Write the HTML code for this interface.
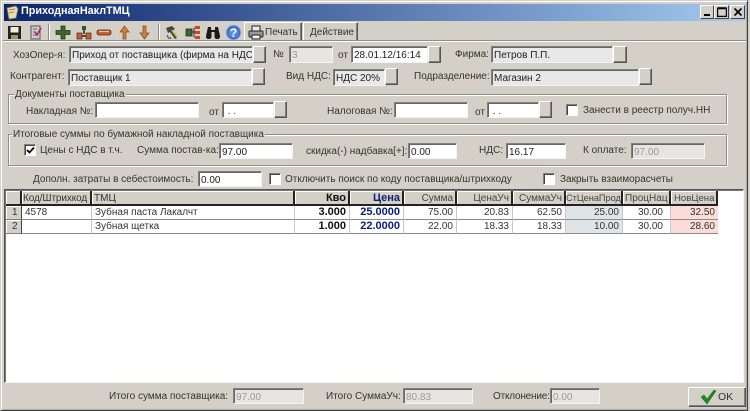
<!DOCTYPE html>
<html><head><meta charset="utf-8"><style>
html,body{margin:0;padding:0;width:750px;height:411px;overflow:hidden;background:#d4d0c8}
body{position:relative;font:10px/13px "Liberation Sans","Noto Sans CJK SC",sans-serif;color:#222}
div,svg{position:absolute;box-sizing:border-box}
.l{white-space:nowrap;color:#333;height:13px}
.i{background:#fff;border:1px solid;border-color:#808080 #f4f3ef #f4f3ef #808080;box-shadow:inset 1px 1px 0 #666;padding:2px 0 0 2px;white-space:nowrap;overflow:hidden;color:#222;font-size:10px}
.g{background:#e8e8e8}
.d{background:#e6e5e2;color:#9a9a9a}
.b{background:#d4d0c8;border:1px solid;border-color:#fff #555 #555 #fff;box-shadow:inset -1px -1px 0 #808080}
.c{width:12px;height:12px;background:#fff;border:1px solid;border-color:#808080 #fff #fff #808080;box-shadow:inset 1px 1px 0 #444}
.gb{border:1px solid #8f8d88;box-shadow:1px 1px 0 #fff,inset 1px 1px 0 #fff}
.gt{background:#d4d0c8;white-space:nowrap;color:#333;padding:0 1px;height:13px}
.h{top:191px;height:15px;background:#d4d0c8;border-right:2px solid #222;border-bottom:2px solid #222;box-shadow:inset 1px 1px 0 #fff;padding:1px 2px 0;white-space:nowrap;overflow:hidden;color:#333}
.r{text-align:right}
.k{height:14px;border-right:1px solid #c8c8c8;border-bottom:1px solid #8a8a8a;padding:0 3px;white-space:nowrap;overflow:hidden;color:#333;line-height:13px;font-size:10px}
.n{font-weight:bold;color:#111;font-size:11px}.p{font-weight:bold;color:#0a1f78;font-size:11px}
.w{height:14px;top:5px;background:#d4d0c8;border:1px solid;border-color:#fff #444 #444 #fff}
</style></head><body>
<div style="left:0;top:0;width:748px;height:411px;border:1px solid;border-color:#d4d0c8 #404040 #404040 #d4d0c8;box-shadow:inset 1px 1px 0 #fff,inset -1px -1px 0 #aaa"></div>

<!-- title -->
<div style="left:4px;top:4px;width:742px;height:17px;background:linear-gradient(90deg,#0a246a,#a6caf0)"></div>
<svg style="left:5px;top:5px" width="14" height="15" viewBox="0 0 14 15"><path d="M2 3L11 1L13 4L11 13L4 14Z" fill="#e8dcb0" stroke="#8a7a50" stroke-width=".8"/><path d="M4 5L10 4M4 8L9 7" stroke="#a08850"/></svg>
<div style="left:21px;top:5px;color:#fff;font-weight:bold;height:14px;font-size:10.800px;white-space:nowrap">ПриходнаяНаклТМЦ</div>
<div class="w" style="left:700px;width:14px"><svg style="left:3px;top:8px" width="8" height="2"><rect width="6" height="2" fill="#000"/></svg></div>
<div class="w" style="left:714px;width:15px"><svg style="left:2px;top:1px" width="10" height="10"><path d="M.5 1.500H9.500V9.500H.5Z M.5 1H9.500" fill="none" stroke="#000" stroke-width="1.400"/></svg></div>
<div class="w" style="left:730px;width:15px"><svg style="left:2px;top:1px" width="10" height="10"><path d="M1.500 1.500L8.500 8.500M8.500 1.500L1.500 8.500" stroke="#000" stroke-width="1.700"/></svg></div>

<!-- toolbar -->
<svg style="left:7px;top:25px" width="15" height="15" viewBox="0 0 15 15"><path d="M1 1H14V14H1Z" fill="#222"/><rect x="3.500" y="2" width="8" height="5.500" fill="#efeedd"/><rect x="4" y="10" width="7" height="4" fill="#9a9a60"/></svg>
<svg style="left:29px;top:25px" width="14" height="15" viewBox="0 0 14 15"><path d="M2 1H11V14H2Z" fill="#ccc" stroke="#555"/><path d="M4 4H8M4 7H7M4 10H8" stroke="#666"/><path d="M6 7L8 10L12 3" fill="none" stroke="#b02070" stroke-width="1.600"/></svg>
<div style="left:48px;top:24px;width:2px;height:16px;border-left:1px solid #8a8a8a;border-right:1px solid #fff"></div>
<svg style="left:55px;top:25px" width="16" height="15" viewBox="0 0 16 15"><path d="M6 1H10V5.500H15V9.500H10V14H6V9.500H1V5.500H6Z" fill="#3a6a28" stroke="#1d3d14" stroke-width=".8"/></svg>
<svg style="left:76px;top:25px" width="16" height="15" viewBox="0 0 16 15"><rect x="6" y="1" width="4" height="4" fill="#2a5a20"/><path d="M8 5V9" stroke="#222" stroke-width="1.500"/><rect x="1" y="8" width="5" height="6" fill="#d85a20" stroke="#333" stroke-width=".7"/><rect x="10" y="8" width="5" height="6" fill="#d85a20" stroke="#333" stroke-width=".7"/><path d="M6 11H10" stroke="#222" stroke-width="1.500"/></svg>
<svg style="left:96px;top:27px" width="16" height="11" viewBox="0 0 16 11"><rect x="1" y="3" width="14" height="5" rx="2" fill="#d85a28" stroke="#333" stroke-width=".8"/><path d="M3 4.500H13" stroke="#f3c0a0"/></svg>
<svg style="left:119px;top:25px" width="11" height="15" viewBox="0 0 11 15"><path d="M5.500 1L10 7H7V14H4V7H1Z" fill="#e8781e" stroke="#555" stroke-width=".7"/></svg>
<svg style="left:139px;top:25px" width="11" height="15" viewBox="0 0 11 15"><path d="M4 1H7V8H10L5.500 14L1 8H4Z" fill="#e8781e" stroke="#555" stroke-width=".7"/></svg>
<div style="left:158px;top:24px;width:2px;height:16px;border-left:1px solid #8a8a8a;border-right:1px solid #fff"></div>
<svg style="left:164px;top:25px" width="16" height="15" viewBox="0 0 16 15"><path d="M2 3L8 1L11 4L8 6L13 13L11 14L6 7L4 8Z" fill="#444"/><path d="M8 5L13 12" stroke="#d8c030" stroke-width="1.600"/><path d="M3 10L5 14M6 12L7 14" stroke="#555" stroke-width="1.200"/></svg>
<svg style="left:185px;top:26px" width="16" height="13" viewBox="0 0 16 13"><rect x="1" y="3" width="6" height="7" fill="#3a6a30" stroke="#222" stroke-width=".7"/><rect x="10" y="0" width="5" height="3" fill="#c84a20"/><rect x="10" y="5" width="5" height="3" fill="#c84a20"/><rect x="10" y="10" width="5" height="3" fill="#c84a20"/><path d="M7 6H10M9 1.500V11.500" stroke="#222"/></svg>
<svg style="left:205px;top:26px" width="16" height="13" viewBox="0 0 16 13"><path d="M3 1H6V4H10V1H13L15 10A2.500 2.500 0 0 1 9.500 11V6H6.500V11A2.500 2.500 0 0 1 1 10Z" fill="#1a1a1a"/></svg>
<svg style="left:225px;top:24px" width="17" height="17" viewBox="0 0 17 17"><circle cx="8.500" cy="8.500" r="7.500" fill="#3f6fc8" stroke="#a8c0e8"/><circle cx="8.500" cy="8.500" r="5" fill="#5a8ae0"/><text x="8.500" y="13" text-anchor="middle" font-family="Liberation Sans" font-weight="bold" font-size="12" fill="#fff">?</text></svg>
<div class="b" style="left:244px;top:22px;width:58px;height:20px"></div>
<svg style="left:248px;top:25px" width="16" height="15" viewBox="0 0 16 15"><rect x="4" y="1" width="8" height="5" fill="#eee" stroke="#222"/><rect x="1" y="6" width="14" height="6" rx="1" fill="#999" stroke="#222"/><rect x="4" y="10" width="8" height="4" fill="#eee" stroke="#222"/></svg>
<div class="l" style="left:265px;top:26px">Печать</div>
<div class="b" style="left:303px;top:22px;width:55px;height:20px"></div>
<div class="l" style="left:310px;top:26px">Действие</div>
<div style="left:3px;top:40px;width:743px;height:2px;border-top:1px solid #8f8d88;border-bottom:1px solid #fff"></div>

<!-- row 1 -->
<div class="l" style="left:13px;top:49px">ХозОпер-я:</div>
<div class="i g" style="left:69px;top:46px;width:184px;height:17px">Приход от поставщика (фирма на НДС</div>
<div class="b" style="left:253px;top:46px;width:13px;height:17px"></div>
<div class="l" style="left:273px;top:48px">№</div>
<div class="i d" style="left:289px;top:46px;width:44px;height:17px">3</div>
<div class="l" style="left:338px;top:49px">от</div>
<div class="i" style="left:351px;top:46px;width:77px;height:17px">28.01.12/16:14</div>
<div class="b" style="left:428px;top:46px;width:13px;height:17px"></div>
<div class="l" style="left:455px;top:48px">Фирма:</div>
<div class="i g" style="left:491px;top:46px;width:122px;height:17px">Петров П.П.</div>
<div class="b" style="left:613px;top:46px;width:14px;height:17px"></div>

<!-- row 2 -->
<div class="l" style="left:10px;top:70px">Контрагент:</div>
<div class="i g" style="left:68px;top:69px;width:184px;height:17px">Поставщик 1</div>
<div class="b" style="left:252px;top:68px;width:13px;height:17px"></div>
<div class="l" style="left:286px;top:70px">Вид НДС:</div>
<div class="i g" style="left:333px;top:69px;width:52px;height:17px">НДС 20%</div>
<div class="b" style="left:385px;top:68px;width:13px;height:17px"></div>
<div class="l" style="left:414px;top:70px">Подразделение:</div>
<div class="i g" style="left:491px;top:69px;width:148px;height:17px">Магазин 2</div>
<div class="b" style="left:639px;top:68px;width:13px;height:17px"></div>

<!-- group 1 -->
<div class="gb" style="left:8px;top:94px;width:719px;height:30px"></div>
<div class="gt" style="left:14px;top:88px">Документы поставщика</div>
<div class="l" style="left:26px;top:105px">Накладная №:</div>
<div class="i" style="left:95px;top:102px;width:104px;height:16px"></div>
<div class="l" style="left:209px;top:106px">от</div>
<div class="i" style="left:222px;top:102px;width:52px;height:16px">&nbsp;. .</div>
<div class="b" style="left:274px;top:101px;width:13px;height:17px"></div>
<div class="l" style="left:327px;top:105px">Налоговая №:</div>
<div class="i" style="left:394px;top:102px;width:74px;height:16px"></div>
<div class="l" style="left:475px;top:106px">от</div>
<div class="i" style="left:487px;top:102px;width:52px;height:16px">&nbsp;. .</div>
<div class="b" style="left:539px;top:101px;width:13px;height:17px"></div>
<div class="c" style="left:566px;top:104px"></div>
<div class="l" style="left:583px;top:104px">Занести в реестр получ.НН</div>

<!-- group 2 -->
<div class="gb" style="left:8px;top:134px;width:719px;height:32px"></div>
<div class="gt" style="left:12px;top:128px">Итоговые суммы по бумажной накладной поставщика</div>
<div class="c" style="left:24px;top:144px"><svg style="left:1px;top:1px" width="9" height="9"><path d="M1 4L3.500 6.500L8 1.500" fill="none" stroke="#000" stroke-width="1.800"/></svg></div>
<div class="l" style="left:40px;top:144px">Цены с НДС в т.ч.</div>
<div class="l" style="left:137px;top:144px">Сумма постав-ка:</div>
<div class="i" style="left:219px;top:143px;width:74px;height:16px">97.00</div>
<div class="l" style="left:306px;top:145px">скидка(-) надбавка[+]:</div>
<div class="i" style="left:408px;top:143px;width:49px;height:16px">0.00</div>
<div class="l" style="left:479px;top:144px">НДС:</div>
<div class="i" style="left:506px;top:143px;width:60px;height:16px">16.17</div>
<div class="l" style="left:583px;top:144px">К оплате:</div>
<div class="i d" style="left:631px;top:143px;width:74px;height:16px">97.00</div>

<!-- row 3 -->
<div class="l" style="left:33px;top:173px">Дополн. затраты в себестоимость:</div>
<div class="i" style="left:198px;top:171px;width:64px;height:16px">0.00</div>
<div class="c" style="left:269px;top:173px"></div>
<div class="l" style="left:285px;top:173px">Отключить поиск по коду поставщика/штрихкоду</div>
<div class="c" style="left:543px;top:173px"></div>
<div class="l" style="left:560px;top:173px">Закрыть взаиморасчеты</div>

<!-- grid -->
<div style="left:4px;top:189px;width:740px;height:194px;background:#fff;border:1px solid;border-color:#555 #f4f3ef #f4f3ef #555;box-shadow:inset 1px 1px 0 #777"></div>
<div class="h" style="left:6px;width:16px"></div>
<div class="h" style="left:22px;width:70px;padding-left:1px;letter-spacing:-.1px">Код/Штрихкод</div>
<div class="h" style="left:92px;width:203px">ТМЦ</div>
<div class="h r n" style="left:295px;width:55px">Кво</div>
<div class="h r p" style="left:350px;width:54px">Цена</div>
<div class="h r" style="left:404px;width:53px;color:#444">Сумма</div>
<div class="h r" style="left:457px;width:56px;color:#444">ЦенаУч</div>
<div class="h r" style="left:513px;width:53px;color:#444">СуммаУч</div>
<div class="h" style="left:566px;width:57px;padding:1px 0 0 0;color:#444;font-size:9.200px">СтЦенаПрод</div>
<div class="h" style="left:623px;width:48px;color:#444">ПроцНац</div>
<div class="h" style="left:671px;width:47px;color:#444;padding-left:3px;font-size:9.600px">НовЦена</div>

<div class="h" style="left:6px;top:206px;width:16px;height:14px;border:0;border-right:1px solid #444;border-bottom:1px solid #808080;padding:0 0 0 6px;line-height:13px">1</div>
<div class="h" style="left:6px;top:220px;width:16px;height:14px;border:0;border-right:1px solid #444;border-bottom:1px solid #808080;padding:0 0 0 6px;line-height:13px">2</div>

<div class="k" style="left:22px;top:206px;width:70px">4578</div>
<div class="k" style="left:92px;top:206px;width:203px">Зубная паста Лакалчт</div>
<div class="k r n" style="left:295px;top:206px;width:55px">3.000</div>
<div class="k r p" style="left:350px;top:206px;width:54px">25.0000</div>
<div class="k r" style="left:404px;top:206px;width:53px">75.00</div>
<div class="k r" style="left:457px;top:206px;width:56px">20.83</div>
<div class="k r" style="left:513px;top:206px;width:53px">62.50</div>
<div class="k r" style="left:566px;top:206px;width:57px;background:#dfe5e6">25.00</div>
<div class="k r" style="left:623px;top:206px;width:48px;padding-right:7px">30.00</div>
<div class="k r" style="left:671px;top:206px;width:47px;background:#fbdcd8;border-right:0">32.50</div>

<div class="k" style="left:22px;top:220px;width:70px"></div>
<div class="k" style="left:92px;top:220px;width:203px">Зубная щетка</div>
<div class="k r n" style="left:295px;top:220px;width:55px">1.000</div>
<div class="k r p" style="left:350px;top:220px;width:54px">22.0000</div>
<div class="k r" style="left:404px;top:220px;width:53px">22.00</div>
<div class="k r" style="left:457px;top:220px;width:56px">18.33</div>
<div class="k r" style="left:513px;top:220px;width:53px">18.33</div>
<div class="k r" style="left:566px;top:220px;width:57px;background:#dfe5e6">10.00</div>
<div class="k r" style="left:623px;top:220px;width:48px;padding-right:7px">30.00</div>
<div class="k r" style="left:671px;top:220px;width:47px;background:#fbdcd8;border-right:0">28.60</div>

<!-- bottom -->
<div class="l" style="left:109px;top:390px">Итого сумма поставщика:</div>
<div class="i d" style="left:233px;top:388px;width:71px;height:16px">97.00</div>
<div class="l" style="left:326px;top:390px">Итого СуммаУч:</div>
<div class="i d" style="left:403px;top:388px;width:70px;height:16px">80.83</div>
<div class="l" style="left:493px;top:390px;letter-spacing:-.2px">Отклонение:</div>
<div class="i d" style="left:550px;top:388px;width:50px;height:16px">0.00</div>
<div class="b" style="left:688px;top:387px;width:58px;height:20px"></div>
<svg style="left:700px;top:389px" width="17" height="16" viewBox="0 0 17 16"><path d="M1 8L4 6L7 10L14 1L16 2L7 15Z" fill="#1d8a1d" stroke="#0d5a0d" stroke-width=".5"/></svg>
<div class="l" style="left:718px;top:391px;font-size:10.400px">OK</div>
</body></html>
